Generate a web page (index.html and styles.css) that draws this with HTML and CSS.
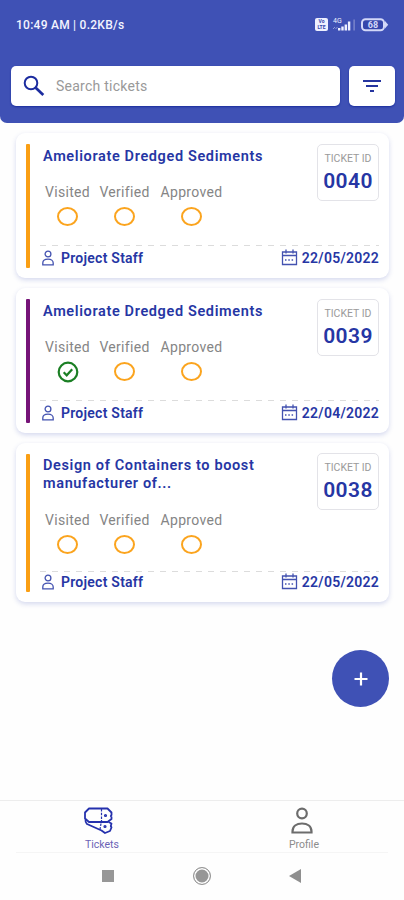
FILE: index.html
```html
<!DOCTYPE html>
<html lang="en">
<head>
    <meta charset="utf-8">
    <meta name="viewport" content="width=device-width, initial-scale=1">
    <title>Tickets</title>
    <link rel="stylesheet" href="styles.css">
</head>
<body>
    <!-- shared icons -->
    <svg class="defs" width="0" height="0">
        <symbol id="staff" viewBox="0 0 12 16">
            <circle cx="6" cy="4" r="2.9"/>
            <path d="M0.8 14.8V13c0-2.4 2-3.900 5.200-3.900s5.200 1.500 5.200 3.900v1.800z"/>
        </symbol>
        <symbol id="calendar" viewBox="0 0 17 17">
            <path d="M1.500 3h14v12.500h-14zM1.500 6.500h14M5 0.500v4M12 0.500v4"/>
            <path d="M4 11h9.500" stroke-dasharray="1.500 1.800"/>
        </symbol>
        <symbol id="check" viewBox="0 0 22 22">
            <circle cx="11" cy="11" r="9.3"/>
            <path d="M6.7 11.2l3 3.1 5.5-6"/>
        </symbol>
    </svg>

    <header class="header">
        <div class="status-bar">
            <span class="clock">10:49 AM | 0.2KB/s</span>
            <div class="status-icons">
                <span class="volte"><b>Vo</b><b>LTE</b></span>
                <svg class="signal" width="24" height="15" viewBox="0 0 24 15">
                    <text x="1" y="5.500">4G</text>
                    <path d="M1 12l2-2M3.500 12l2-2" stroke="#8f9ad6" fill="none"/>
                    <path d="M6 11h2.400v2.500H6zM9.300 9.500h2.400v4H9.300zM12.600 7.500H15v6h-2.400zM15.900 4.500h2.400v9h-2.400z" fill="#eef0ff"/>
                    <path d="M21.500 2.500h1.200v11h-1.200z" fill="#8791d0"/>
                </svg>
                <svg class="battery" width="28" height="14" viewBox="0 0 28 14">
                    <rect x="1" y="1.200" width="22" height="11" rx="3.500" fill="#3546ab" stroke="#d3d8f8" stroke-width="2"/>
                    <path d="M24 3l3.200 3.700-3.200 3.700z" fill="#d3d8f8"/>
                    <text x="12" y="9.900" text-anchor="middle">68</text>
                </svg>
            </div>
        </div>
        <div class="search-row">
            <div class="search">
                <svg width="22" height="22" viewBox="0 0 22 22">
                    <circle cx="8" cy="8" r="6.300" fill="none" stroke="#1c2c9f" stroke-width="2"/>
                    <path d="M12.700 12.700l7.600 7.300" stroke="#1c2c9f" stroke-width="2.700"/>
                </svg>
                <span>Search tickets</span>
            </div>
            <div class="filter">
                <svg width="20" height="14" viewBox="0 0 20 14">
                    <path d="M1 2h18M4 7h12M8 12h4" stroke="#26359f" stroke-width="1.800"/>
                </svg>
            </div>
        </div>
    </header>

    <main class="tickets">
        <article class="card">
            <div class="stripe"></div>
            <div class="content">
                <h2 class="title">Ameliorate Dredged Sediments</h2>
                <div class="steps">
                    <div class="step visited"><span>Visited</span><i class="ring"></i></div>
                    <div class="step verified"><span>Verified</span><i class="ring"></i></div>
                    <div class="step approved"><span>Approved</span><i class="ring"></i></div>
                </div>
                <div class="footer">
                    <svg class="icon staff"><use href="#staff"/></svg>
                    <span class="name">Project Staff</span>
                    <svg class="icon calendar"><use href="#calendar"/></svg>
                    <span class="date">22/05/2022</span>
                </div>
            </div>
            <div class="ticket-id"><span>TICKET ID</span><b>0040</b></div>
        </article>

        <article class="card">
            <div class="stripe purple"></div>
            <div class="content">
                <h2 class="title">Ameliorate Dredged Sediments</h2>
                <div class="steps">
                    <div class="step visited"><span>Visited</span><svg class="done"><use href="#check"/></svg></div>
                    <div class="step verified"><span>Verified</span><i class="ring"></i></div>
                    <div class="step approved"><span>Approved</span><i class="ring"></i></div>
                </div>
                <div class="footer">
                    <svg class="icon staff"><use href="#staff"/></svg>
                    <span class="name">Project Staff</span>
                    <svg class="icon calendar"><use href="#calendar"/></svg>
                    <span class="date">22/04/2022</span>
                </div>
            </div>
            <div class="ticket-id"><span>TICKET ID</span><b>0039</b></div>
        </article>

        <article class="card tall">
            <div class="stripe"></div>
            <div class="content">
                <h2 class="title">Design of Containers to boost<br>manufacturer of...</h2>
                <div class="steps">
                    <div class="step visited"><span>Visited</span><i class="ring"></i></div>
                    <div class="step verified"><span>Verified</span><i class="ring"></i></div>
                    <div class="step approved"><span>Approved</span><i class="ring"></i></div>
                </div>
                <div class="footer">
                    <svg class="icon staff"><use href="#staff"/></svg>
                    <span class="name">Project Staff</span>
                    <svg class="icon calendar"><use href="#calendar"/></svg>
                    <span class="date">22/05/2022</span>
                </div>
            </div>
            <div class="ticket-id"><span>TICKET ID</span><b>0038</b></div>
        </article>
    </main>

    <div class="add">
        <svg width="14" height="14" viewBox="0 0 14 14">
            <path d="M7 0.500v13M0.500 7h13" stroke="#fff" stroke-width="2.200"/>
        </svg>
    </div>

    <nav class="tabs">
        <div class="tab active">
            <svg width="30" height="28" viewBox="0 0 30 28" fill="none" stroke="#2531ad" stroke-width="1.800" stroke-linejoin="round">
                <path d="M6 1.500h18.500l4 4v2.500l-.7 1 .7 1v2l-4 3H6L2 11.500v-6z"/>
                <path d="M2.500 12.500c-.2 1.800.2 3.200 1.500 4.500l14.500 6.500 3.500 2.500 5-2 1.500-3.500-.7-1.500.7-2.500-3-1.500"/>
                <path d="M18.500 2v13M18 16.500l-1 6" stroke-width="1.200" stroke-dasharray="2.500 1.200"/>
                <circle cx="22.500" cy="8.500" r=".7"/>
                <circle cx="22" cy="19.500" r=".7"/>
            </svg>
            <span>Tickets</span>
        </div>
        <div class="tab">
            <svg width="22" height="28" viewBox="0 0 22 28" fill="none" stroke="#6c6c6c" stroke-width="2.200">
                <circle cx="11" cy="6.500" r="4.800"/>
                <path d="M1.500 25.500v-1c0-5 4-8 9.500-8s9.500 3 9.500 8v1z"/>
            </svg>
            <span>Profile</span>
        </div>
    </nav>

    <div class="system-nav">
        <i class="recent"></i>
        <i class="home"></i>
        <i class="back"></i>
    </div>
</body>
</html>
```
FILE: styles.css
```css
* {
    box-sizing: border-box;
}
body {
    margin: 0;
    height: 900px;
    display: flex;
    flex-direction: column;
    overflow: hidden;
    background: #fefefe;
    font-family: Roboto, "Liberation Sans", sans-serif;
    color: #2636a4;
}
svg {
    flex: none;
}
.defs {
    position: absolute;
}

/* Header */
.header {
    height: 123px;
    flex: none;
    padding: 0 9px 0 11px;
    background: #3f51b5;
    border-radius: 0 0 7px 7px;
}
.status-bar {
    height: 66px;
    padding: 17px 6px 0 5px;
    display: flex;
    justify-content: space-between;
    align-items: flex-start;
}
.clock {
    font-size: 12px;
    line-height: 16px;
    font-weight: 500;
    letter-spacing: 0.25px;
    color: #f3f4ff;
}
.status-icons {
    display: flex;
    align-items: center;
}
.volte {
    width: 13px;
    height: 13px;
    padding-top: 1px;
    margin-right: 4px;
    border-radius: 2px;
    background: #eef0ff;
    color: #3546ab;
    font-size: 5px;
    line-height: 5.5px;
    text-align: center;
}
.volte b {
    display: block;
}
.signal {
    margin-right: 5px;
}
.signal text {
    font-size: 7px;
    fill: #eef0ff;
}
.battery text {
    font-size: 9px;
    font-weight: 700;
    fill: #d3d8f8;
}
.search-row {
    display: flex;
    gap: 9px;
}
.search, .filter {
    height: 40px;
    display: flex;
    align-items: center;
    border-radius: 5px;
    background: #fff;
    box-shadow: 0 1px 2px #1a2e9c;
}
.search {
    flex: 1;
    padding-left: 12px;
    gap: 11px;
    font-size: 14px;
    letter-spacing: 0.25px;
    color: #999;
}
.filter {
    width: 46px;
    justify-content: center;
}

/* Ticket cards */
.tickets {
    display: flex;
    flex-direction: column;
    gap: 10px;
    padding: 10px 15px 0 16px;
}
.card {
    height: 145px;
    padding: 11px 10px 10px;
    display: grid;
    grid-template-columns: 4px 1fr 62px;
    background: #fff;
    border-radius: 9px;
    box-shadow: 0 2px 5px rgba(63, 81, 181, 0.22);
}
.card.tall {
    height: 159px;
}
.stripe {
    grid-row: 1;
    background: #fa9f14;
    border-radius: 1px;
}
.stripe.purple {
    background: #761478;
}
.content {
    grid-row: 1;
    grid-column: 2 / 4;
    padding-left: 10px;
    display: flex;
    flex-direction: column;
}
.title {
    margin: 4px 0 0 3px;
    font-size: 14.5px;
    line-height: 18px;
    font-weight: 600;
    letter-spacing: 0.63px;
}
.steps {
    display: flex;
    margin: 17px 0 0 5px;
    font-size: 14px;
    line-height: 18px;
    letter-spacing: 0.3px;
    color: #858585;
}
.tall .title {
    margin-top: 3px;
}
.tall .steps {
    margin-top: 18px;
}
.step {
    display: flex;
    flex-direction: column;
    align-items: center;
    white-space: nowrap;
}
.visited {
    width: 45px;
}
.verified {
    width: 49px;
    margin-left: 10px;
}
.approved {
    width: 63px;
    margin-left: 11px;
}
.ring {
    width: 21px;
    height: 19px;
    margin-top: 6px;
    border: 2px solid #fba41e;
    border-radius: 50%;
}
.done {
    width: 22px;
    height: 22px;
    margin: 5px 0 -2px;
    fill: none;
    stroke: #1b7f24;
    stroke-width: 2.2;
}
.footer {
    margin-top: auto;
    height: 23px;
    display: flex;
    align-items: center;
    background: repeating-linear-gradient(90deg, #dcdcdc 0 6px, transparent 6px 12px) 0 0 / 100% 1px no-repeat;
    font-size: 14px;
    font-weight: 600;
    letter-spacing: 0.25px;
    padding-top: 3px;
}
.tall .footer {
    height: 21px;
    padding-top: 1px;
}
.icon {
    fill: none;
    stroke: #4352b0;
    stroke-width: 1.3;
}
.icon.staff {
    width: 12px;
    height: 16px;
    margin: 0 7px 0 2px;
}
.icon.calendar {
    width: 17px;
    height: 17px;
    margin: -2px 4px 0 auto;
}
.ticket-id {
    grid-row: 1;
    grid-column: 3;
    height: 57px;
    padding-top: 6px;
    border: 1px solid #e3e3e8;
    border-radius: 5px;
    text-align: center;
}
.tall .ticket-id {
    margin-top: -1px;
}
.ticket-id span, .ticket-id b {
    display: block;
    white-space: nowrap;
}
.ticket-id span {
    font-size: 10.5px;
    line-height: 15px;
    color: #9a9a9a;
}
.ticket-id b {
    font-size: 21px;
    line-height: 30px;
    font-weight: 600;
    letter-spacing: 0.4px;
}

/* Floating button */
.add {
    position: absolute;
    left: 332px;
    top: 650px;
    width: 57px;
    height: 57px;
    display: flex;
    align-items: center;
    justify-content: center;
    border-radius: 50%;
    background: #3f51b5;
}

/* Bottom bars */
.tabs {
    flex: none;
    height: 52px;
    margin-top: auto;
    display: grid;
    grid-template-columns: 1fr 1fr;
    border-top: 1px solid #ededed;
}
.tab {
    display: flex;
    flex-direction: column;
    align-items: center;
    padding: 6px 0 0 2px;
    font-size: 10.5px;
    line-height: 20px;
    color: #8c8c8c;
}
.tab svg {
    margin-right: 5px;
}
.tab.active {
    padding-left: 0;
    color: #6b62b5;
}
.tab.active svg {
    margin-right: 7px;
}
.tab.active span {
    margin-left: 2px;
}
.system-nav {
    flex: none;
    height: 48px;
    margin: 0 16px;
    padding: 0 87px 1px 86px;
    display: flex;
    align-items: center;
    justify-content: space-between;
    border-top: 1px solid #f5f5f5;
}
.recent {
    width: 12px;
    height: 12px;
    background: #979797;
}
.home {
    width: 18px;
    height: 18px;
    border: 1px solid #979797;
    border-radius: 50%;
    background: #979797;
    box-shadow: inset 0 0 0 1.5px #fefefe;
}
.back {
    width: 12px;
    height: 14px;
    background: #8f8f8f;
    clip-path: polygon(0 50%, 100% 0, 100% 100%);
}
```
